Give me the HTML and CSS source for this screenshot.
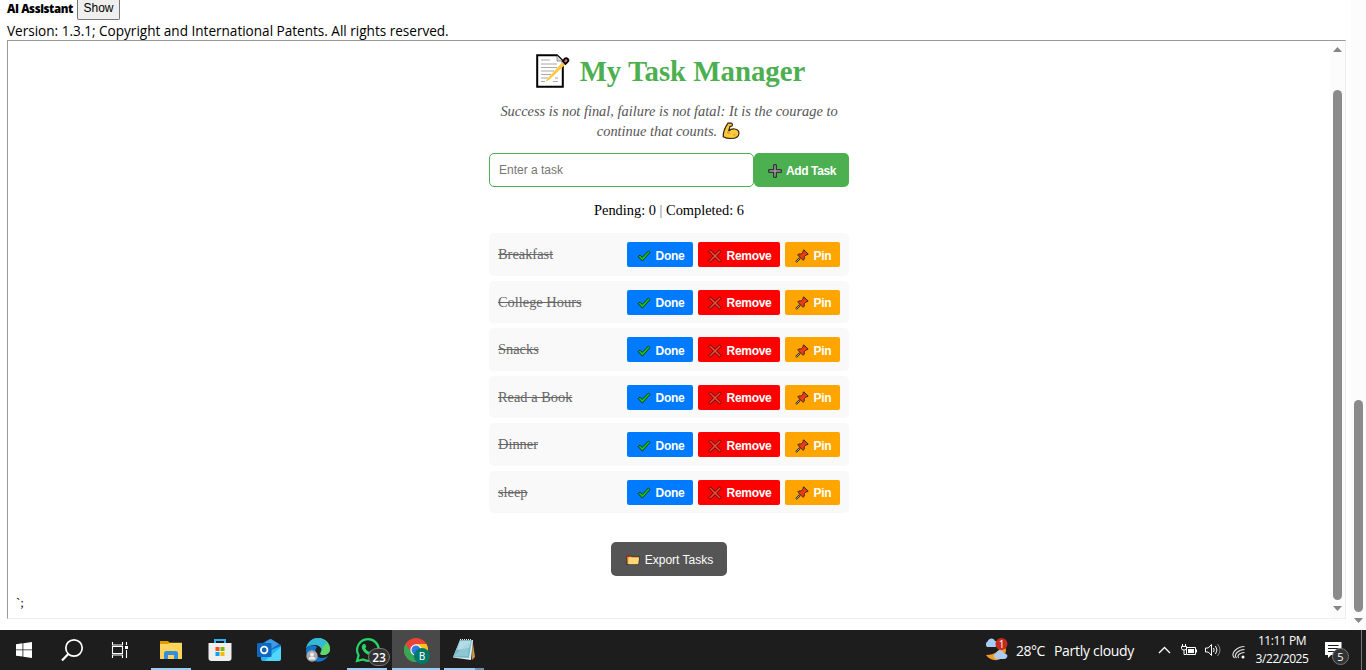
FILE: index.html
```html
<!DOCTYPE html>
<html lang="en">
<head>
<meta charset="utf-8">
<title>My Task Manager</title>
<link rel="stylesheet" href="styles.css">
</head>
<body>
<svg class="defs" width="0" height="0">
  <symbol id="check" viewBox="0 0 14 14"><path d="M1.200 7.600 3 6.100l2.200 2.300L11.400 2l1.600 1.500-7.600 8.600z" fill="#16c60c" stroke="#1a2a1a" stroke-width=".9"/></symbol>
  <symbol id="cross" viewBox="0 0 14 14"><path d="M1 2.500 2.500 1 7 5.300 11.500 1 13 2.500 8.700 7l4.300 4.500-1.500 1.500L7 8.700 2.500 13 1 11.500 5.300 7z" fill="#f04a35" stroke="#4d1010" stroke-width="1"/></symbol>
  <symbol id="pin" viewBox="0 0 14 14"><path d="M5 9 1 13" stroke="#222" stroke-width="2"/><path d="M4.600 9.400 1.300 12.700" stroke="#ccc" stroke-width=".8"/><path d="m8.700.8 4.500 4.300-1.300.9-.8-.2-1.900 2 .1 2.400-1.200 1.100L2.700 6l1.100-1.100 2.400.1 2-2-.3-1z" fill="#f03a17" stroke="#302018" stroke-width=".9"/></symbol>
</svg>

<main class="page">
  <section class="content">
    <div class="assistant"><b class="assistant-name">AI Assistant</b><button class="show">Show</button></div>
    <p class="version">Version: 1.3.1; Copyright and International Patents. All rights reserved.</p>
    <div class="frame">
      <div class="frame-body">
        <div class="app">
          <h1 class="title">
            <svg class="memo" viewBox="0 0 34 34"><path d="M1.200 1.200H21l5.800 5.800v25.800H1.200z" fill="#fff" stroke="#000" stroke-width="2"/><path d="M21 1.500V7h5.500" fill="#ddd" stroke="#555" stroke-width=".6"/><path d="M5 6h9M5 10h16M5 13.500h16M5 17h13M5 20.500h10M5 24h7M5 27.500h4M19 24h3M17 27.500h5" stroke="#aaa" stroke-width="1.200"/><path d="m11.500 24.500-1.700 3 3.200-1.400L31.500 8.500 28.700 5.800z" fill="#ffc83d"/><path d="m25.500 8.500 3-3 2.700 2.700-3 3z" fill="#bbb"/><path d="m27 7 2-2.600q1.200-.8 2.500.3 1.600 1.200.5 2.700L29.500 10z" fill="#e96a5b" stroke="#000" stroke-width="1.800"/></svg>
            <span>My Task Manager</span>
          </h1>
          <p class="quote"><span class="q1">Success is not final, failure is not fatal: It is the courage to</span><span class="q2">continue that counts.<svg class="arm" viewBox="0 0 18 18"><path d="M6 1.200 9.500 1q1.300.5.8 2.600-.9 1-2.300.8L6.600 9.200q2.400-2.600 6-2.200 4.400.6 4.400 4.500-.6 5-7.800 5-5 0-8-1.800Q1 10 4 4.300z" fill="#ffc83d" stroke="#302712" stroke-width="1.200"/><path d="M5 10q1.300 1.600 2.800 1M11.500 13q1 .2 2-.8" fill="none" stroke="#b57916" stroke-width=".8"/></svg></span></p>
          <div class="entry">
            <input class="task-input" placeholder="Enter a task">
            <button class="add"><svg class="plus" viewBox="0 0 14 14"><path d="M5.700.7h2.600v5h5v2.600h-5v5H5.700v-5h-5V5.700h5z" fill="#9a929b" stroke="#202020"/></svg><span>Add Task</span></button>
          </div>
          <p class="stats">Pending: 0 <i class="bar">|</i> Completed: 6</p>
          <ul class="tasks">
            <li class="task"><s class="name">Breakfast</s><button class="act done"><svg class="ic"><use href="#check"/></svg><span>Done</span></button><button class="act remove"><svg class="ic"><use href="#cross"/></svg><span>Remove</span></button><button class="act pin"><svg class="ic"><use href="#pin"/></svg><span>Pin</span></button></li>
            <li class="task"><s class="name">College Hours</s><button class="act done"><svg class="ic"><use href="#check"/></svg><span>Done</span></button><button class="act remove"><svg class="ic"><use href="#cross"/></svg><span>Remove</span></button><button class="act pin"><svg class="ic"><use href="#pin"/></svg><span>Pin</span></button></li>
            <li class="task"><s class="name">Snacks</s><button class="act done"><svg class="ic"><use href="#check"/></svg><span>Done</span></button><button class="act remove"><svg class="ic"><use href="#cross"/></svg><span>Remove</span></button><button class="act pin"><svg class="ic"><use href="#pin"/></svg><span>Pin</span></button></li>
            <li class="task"><s class="name">Read a Book</s><button class="act done"><svg class="ic"><use href="#check"/></svg><span>Done</span></button><button class="act remove"><svg class="ic"><use href="#cross"/></svg><span>Remove</span></button><button class="act pin"><svg class="ic"><use href="#pin"/></svg><span>Pin</span></button></li>
            <li class="task"><s class="name">Dinner</s><button class="act done"><svg class="ic"><use href="#check"/></svg><span>Done</span></button><button class="act remove"><svg class="ic"><use href="#cross"/></svg><span>Remove</span></button><button class="act pin"><svg class="ic"><use href="#pin"/></svg><span>Pin</span></button></li>
            <li class="task"><s class="name">sleep</s><button class="act done"><svg class="ic"><use href="#check"/></svg><span>Done</span></button><button class="act remove"><svg class="ic"><use href="#cross"/></svg><span>Remove</span></button><button class="act pin"><svg class="ic"><use href="#pin"/></svg><span>Pin</span></button></li>
          </ul>
          <button class="export"><svg class="folder" viewBox="0 0 14 12"><path d="M.8 2h4l1 .8h7.400L12.500 10.500H1z" fill="#f5ae35" stroke="#2b2013" stroke-width=".8"/><path d="M.8 1.500h3v1.500h-3z" fill="#e81224"/><path d="M2.800 3.500h10.300l-.9 6.700H2.300z" fill="#ffd67a"/></svg><span>Export Tasks</span></button>
        </div>
        <p class="stray">`;</p>
      </div>
      <div class="scroll inner"><svg class="arrow" viewBox="0 0 9 5"><path d="M0 5h9L4.500 0z"/></svg><i class="thumb"></i><svg class="arrow" viewBox="0 0 9 5"><path d="M0 0h9L4.500 5z"/></svg></div>
    </div>
  </section>
  <div class="scroll outer"><i class="thumb"></i><svg class="arrow" viewBox="0 0 9 5"><path d="M0 0h9L4.500 5z"/></svg></div>
</main>

<footer class="taskbar">
  <div class="sys"><svg width="16" height="16" viewBox="0 0 16 16"><path d="M0 2.200 6.500 1.300v6.200H0zM7.300 1.200 16 0v7.500H7.300zM0 8.300h6.500v6.300L0 13.700zM7.300 8.300H16V16l-8.700-1.200z" fill="#fff"/></svg></div>
  <div class="sys"><svg width="24" height="24" viewBox="0 0 24 24" fill="none" stroke="#fff"><circle cx="14" cy="10" r="8.200" stroke-width="1.700"/><path d="M8.300 16 2 22.500" stroke-width="2.200"/></svg></div>
  <div class="sys"><svg width="18" height="18" viewBox="0 0 18 18" fill="none" stroke="#fff" stroke-width="1.100"><path d="M1.500 1v3h10V1M1.500 5.500h10v7h-10zM1.500 17v-3h10v3M15.500 1v3M15.500 9v8"/><path d="M14 5h3v3h-3z" fill="#fff" stroke="none"/></svg></div>
  <div class="apps">
    <div class="cell open"><svg width="24" height="24" viewBox="0 0 24 24"><path d="M1 3h8l2 2h12v16H1z" fill="#e09b00"/><path d="M1 6h8l2-1.300h12V21H1z" fill="#ffd45c"/><path d="M5 21v-6.500L6.500 13h11l1.500 1.500V21h-4v-4H9v4z" fill="#3490dc"/></svg></div>
    <div class="cell"><svg width="24" height="24" viewBox="0 0 24 24"><path d="M7 6V2h10v4" fill="none" stroke="#29b6f0" stroke-width="2"/><path d="M.5 5h23v15q0 3-3 3h-17q-3 0-3-3z" fill="#efefef"/><path d="M7.500 9h4v4h-4z" fill="#f25022"/><path d="M12.500 9h4v4h-4z" fill="#7fba00"/><path d="M7.500 14h4v4h-4z" fill="#00a4ef"/><path d="M12.500 14h4v4h-4z" fill="#ffb900"/></svg></div>
    <div class="cell"><svg width="24" height="24" viewBox="0 0 24 24"><path d="M4 6 13 .8 24 7v5H4z" fill="#1769c2"/><path d="M9 3.500 14 1l8 5-8 5-7-5z" fill="#3e9be5"/><path d="M4 10l10 2 10-4v13q0 2-2 2H6q-2 0-2-2z" fill="#28b5f4"/><path d="M24 9 8 22.500q10 1 15 0 1-1 1-2z" fill="#52d6fa"/><rect y="5" width="14.500" height="14" rx="1" fill="#0f68be"/><circle cx="7.200" cy="12" r="3.300" fill="none" stroke="#fff" stroke-width="1.700"/></svg></div>
    <div class="cell"><svg width="24" height="24" viewBox="0 0 24 24"><path d="M0 11C1 4 6 0 12 0c7 0 12 5 12 11 0 4-3 6-7 6-3 0-3-1.500-2-3 2-4-2-7-6-7-4 0-7 1-9 4z" fill="#2ab7c8"/><path d="M12 0c7 0 12 5 12 11 0 4-3 6-7 6-3 0-3-1.500-2-3 4-7 0-11-3-14z" fill="#62d568"/><path d="M12 0c4 0 7 2 9 5l-6 5c-2-4-9-5-14-2 2-5 6-8 11-8z" fill="#35b9d9"/><path d="M0 12c1-4 7-6 11-3-3 3-2 10 4 11 3 0 5-1 7-2-3 5-9 7-14 5-6-2-8-7-8-11z" fill="#1374cc"/><circle cx="6" cy="18" r="5.700" fill="#aaa"/><circle cx="6" cy="16.500" r="1.900" fill="#eee"/><path d="M2.500 21.500c0-4 7-4 7 0" fill="#eee"/></svg></div>
    <div class="cell open"><svg width="26" height="26" viewBox="0 0 26 26"><path d="M3 24 4.600 18.300A10.800 10.800 0 1 1 9 22.500z" fill="none" stroke="#25d366" stroke-width="2.200"/><path d="M9 7.500c1-1 2-.8 2.300 0l1 2.300-1 1.500c1 2 2.300 3 4 3.700l1.400-1.500 2.800 1.400c.3 2-1.200 3.200-3.200 3.300-4.500-.5-8.300-4.500-8.500-8.200 0-1 .5-2 1.200-2.500z" fill="#25d366"/></svg><span class="badge count">23</span></div>
    <div class="cell active"><svg width="24" height="24" viewBox="0 0 24 24"><circle cx="12" cy="12" r="12" fill="#ea4335"/><path d="M1.600 6A12 12 0 0 0 12 24l5-9-10-1z" fill="#34a853"/><path d="M12 24A12 12 0 0 0 22.400 6H12l5.200 9z" fill="#fbc116"/><circle cx="12" cy="12" r="5.700" fill="#fff"/><circle cx="12" cy="12" r="4.500" fill="#3079e8"/></svg><span class="badge profile">B</span></div>
    <div class="cell open note"><svg width="24" height="24" viewBox="0 0 24 24"><path d="M20.500 2.500 23 19l-3 3z" fill="#c99b4b"/><path d="M8 2h13l-2 20L1 19.500z" fill="#e7eef0"/><path d="M8 2h12l-3 18-16-1z" fill="#75b8c9"/><path d="M8 3h11l-2 7-12 2z" fill="#b5dce3"/><path d="M2 18 17 4l-1 14z" fill="#9fd0da" opacity=".6"/><path d="M8 1.500h12" stroke="#eee" stroke-dasharray="1 1"/></svg></div>
  </div>
  <div class="tray">
    <svg class="weather" width="25" height="24" viewBox="0 0 25 24"><path d="M16 4c3 6-1 13-13 13 5 8 19 7 20-5 0-4-3-7-7-8z" fill="#f59a23"/><path d="M4 9a3.500 3.500 0 0 1 .5-5.500C6-.5 11-.5 12 3c4 0 4 6 0 6z" fill="#a9cbf5"/><path d="M14 21c-4 0-4-5-1-5.500 1-4 7-4 8 0 5 0 4 5.500 0 5.500z" fill="#a9cbf5"/><circle cx="18.500" cy="6" r="6" fill="#c42b1c"/><text x="18.500" y="9.500" class="one">1</text></svg>
    <span class="temp">28°C</span><span class="cloudy">Partly cloudy</span>
    <svg class="chev" width="13" height="8" viewBox="0 0 13 8"><path d="m1 7 5.500-5.500L12 7" fill="none" stroke="#fff" stroke-width="1.300"/></svg>
    <svg class="battery" width="17" height="13" viewBox="0 0 17 13" fill="none" stroke="#fff"><path d="M5.500 3.500h9v7h-9zM15.500 5.500v3M1.500 0v2M4.500 0v2M.5 2.500h5v2q0 1.500-2.500 1.500T.5 4.500zM3 6v4.500h2"/><path d="M7 5h6v4H7z" fill="#fff" stroke="none"/></svg>
    <svg class="sound" width="17" height="14" viewBox="0 0 17 14" fill="none" stroke="#fff"><path d="M.5 5h2.700l3.300-3.500v11L3.200 9H.5zM8.500 5q1.300 2 0 4M10.500 3q3 4 0 8"/><path d="M12.500 1q5 6 0 12" stroke="#888"/></svg>
    <svg class="wifi" width="14" height="14" viewBox="0 0 14 14" fill="none" stroke="#ddd" stroke-width="1.100"><path d="M2.500 13Q-1 9.500 3 5.500T12.500 1.500M4.500 13Q2 10.500 5 7.500T12.500 4.500M6.800 13Q5 11 7.200 9.200T12.500 7.500"/><circle cx="11" cy="12" r="1.500" fill="#fff" stroke="none"/></svg>
    <div class="clock"><span class="time">11:11 PM</span><span class="date">3/22/2025</span></div>
    <div class="notice"><svg width="17" height="17" viewBox="0 0 17 17"><path d="M0 0h16.500v13H6l-3 3v-3H0z" fill="#fff"/><path d="M3 3.500h10.500M3 6.500h10.500M3 9.500h7" stroke="#1d1d1d"/></svg><span class="badge five">5</span></div>
    <i class="edge"></i>
  </div>
</footer>
</body>
</html>
```

FILE: styles.css
```css
* { box-sizing: border-box; }
body { margin: 0; width: 1366px; height: 670px; overflow: hidden; display: flex; flex-direction: column; background: #fff; color: #000; }
p, h1, ul { margin: 0; padding: 0; }
svg { flex: none; display: block; }
span, b { white-space: nowrap; }
button { margin: 0; padding: 0; border: 0; font-family: "Liberation Sans", Arial, sans-serif; }
.defs { display: none; }
.page { height: 630px; display: flex; justify-content: space-between; }
.content { width: 1346px; padding-left: 7px; }
.assistant { height: 22px; display: flex; align-items: flex-start; font: 700 11.500px/18px "Open Sans", sans-serif; }
.assistant-name { width: 70px; letter-spacing: -.4px; }
.show { width: 43px; height: 20px; border: 1px solid #767676; border-top: 0; border-radius: 0 0 2px 2px; background: #efefef; font-size: 12px; line-height: 14px; padding-bottom: 4px; }
.version { height: 18px; font: 13.600px/18px "Open Sans", sans-serif; letter-spacing: -.02px; white-space: nowrap; }
.frame { width: 1339px; height: 579px; border: 1px solid; border-color: #999 #eee #eee #999; display: flex; }
.frame-body { flex: 1; }
.app { width: 360px; margin-left: 481px; display: flex; flex-direction: column; align-items: center; }
.title { height: 60px; display: flex; align-items: center; gap: 10px; padding-left: 3px; font: 700 28.800px/34px "Liberation Serif", serif; color: #4caf50; }
.memo { width: 34px; height: 34px; }
.quote { height: 52px; display: flex; flex-direction: column; align-items: center; font: italic 14.400px/20px "Liberation Serif", serif; color: #555; }
.q2 { display: flex; gap: 5px; padding-right: 1px; }
.arm { width: 18px; height: 18px; margin-top: 1px; }
.entry { height: 34px; display: flex; width: 360px; }
.task-input { width: 265px; height: 34px; border: 1px solid #4caf50; border-radius: 5px; padding: 0 9px; font: 12px "Liberation Sans", sans-serif; }
.task-input::placeholder { color: #757575; }
.add { width: 95px; height: 34px; border-radius: 5px; background: #4caf50; color: #fff; font-size: 12px; font-weight: 700; letter-spacing: -.4px; display: flex; align-items: center; justify-content: center; gap: 4px; padding: 2px 0 0 1px; }
.plus { width: 14px; height: 14px; }
.stats { height: 46px; font: 14.400px/46px "Liberation Serif", serif; white-space: nowrap; }
.bar { font-style: normal; color: #777; }
.tasks { list-style: none; width: 360px; display: flex; flex-direction: column; gap: 5px; padding-top: .3px; }
.task { height: 42.500px; padding: 0 9px; border-radius: 5px; background: #f9f9f9; display: flex; align-items: center; gap: 5px; }
.name { flex: 1; color: #666; font: 14.400px/18px "Liberation Serif", serif; padding-bottom: .6px; }
.act { height: 25px; border-radius: 2px; display: flex; align-items: center; justify-content: center; gap: 5px; color: #fff; font-size: 12px; font-weight: 700; letter-spacing: -.3px; padding: 2px 0 0 1px; }
.ic { width: 14px; height: 14px; }
.done { width: 66px; background: #007bff; }
.remove { width: 82px; background: #f00; }
.pin { width: 55px; background: #ffa500; }
.export { width: 116px; height: 34px; margin-top: 28.700px; border-radius: 5px; background: #555; color: #fff; font-size: 12px; display: flex; align-items: center; justify-content: center; gap: 5px; padding: 2px 0 0 1px; }
.folder { width: 14px; height: 12px; }
.stray { padding: 18px 0 0 8px; font: 13px/18px "Liberation Serif", serif; }
.scroll { display: flex; flex-direction: column; align-items: center; background: #fcfcfc; }
.thumb { width: 9px; border-radius: 5px; background: #8b8b8b; }
.arrow { width: 9px; height: 5px; fill: #858585; }
.inner { width: 15px; padding-top: 6px; }
.inner .thumb { height: 510px; margin: 38px 0 6px; }
.outer { width: 15px; padding-top: 400px; }
.outer .thumb { height: 212px; margin-bottom: 6px; }
.taskbar { height: 40px; display: flex; background: #1d1d1d; color: #fff; font-family: "Open Sans", sans-serif; }
.sys { width: 48px; display: flex; align-items: center; justify-content: center; }
.apps { display: flex; padding-left: 3px; }
.cell { position: relative; width: 49px; display: flex; align-items: center; justify-content: center; padding-right: 2px; }
.open::after { content: ""; position: absolute; bottom: 0; left: 4px; width: 40px; height: 2px; background: #99cdf5; }
.active { width: 48px; background: #494949; border-bottom: 2px solid #99cdf5; padding: 2px 0 0; }
.note::after { background: linear-gradient(90deg, #99cdf5 31px, #6d91ad 31px); }
.badge { position: absolute; display: flex; align-items: center; justify-content: center; border-radius: 9px; }
.count { left: 25px; top: 18px; width: 22px; height: 18px; background: #333; border: 1px solid #777; font-size: 12px; font-weight: 600; }
.profile { left: 22px; top: 18px; width: 16px; height: 16px; background: #00796b; font: 10px Roboto, sans-serif; }
.tray { margin-left: auto; display: flex; align-items: center; }
.one { font: 10px "Open Sans", sans-serif; fill: #fff; text-anchor: middle; }
.temp, .cloudy { font-size: 14px; }
.temp { width: 38px; margin-left: 8px; letter-spacing: -.5px; }
.cloudy { width: 104px; letter-spacing: -.3px; }
.battery { margin-left: 10px; }
.sound { margin-left: 7px; }
.wifi { margin-left: 10px; margin-top: 3px; }
.clock { width: 62px; margin-left: 5px; display: flex; flex-direction: column; align-items: center; font-size: 12px; line-height: 18px; letter-spacing: -.45px; }
.notice { position: relative; width: 36px; height: 40px; margin-left: 12px; padding-top: 12px; }
.five { left: 7px; top: 18px; width: 17px; height: 17px; background: #333; border: 1px solid #777; font-size: 11px; }
.edge { width: 1px; height: 40px; background: #777; margin-right: 4px; }
```
